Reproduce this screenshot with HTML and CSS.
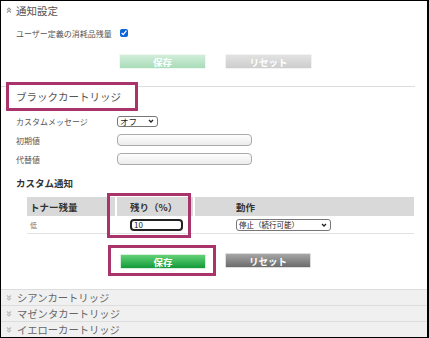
FILE: index.html
```html
<!DOCTYPE html>
<html lang="ja">
<head>
    <meta charset="UTF-8">
    <meta name="viewport" content="width=device-width, initial-scale=1.0">
    <title>トナー通知設定</title>
    <link rel="stylesheet" href="styles.css">
</head>
<body>
    <div class="frame">
        <div class="panel-head">
            <svg class="chev" viewBox="0 0 6 6"><polyline points="1,3 3,1 5,3"/><polyline points="1,5.5 3,3.5 5,5.5"/></svg>
            <span>通知設定</span>
        </div>
        <div class="field check-field">
            <span class="label">ユーザー定義の消耗品残量</span>
            <input type="checkbox" class="check" checked>
        </div>
        <div class="actions top-actions">
            <button class="btn save disabled">保存</button>
            <button class="btn reset disabled">リセット</button>
        </div>

        <div class="cart-head">
            <span class="cart-title">ブラックカートリッジ</span>
        </div>
        <div class="field first">
            <span class="label">カスタムメッセージ</span>
            <span class="select small">オフ<svg viewBox="0 0 6 4"><polyline points="1,1 3,3 5,1"/></svg></span>
        </div>
        <div class="field">
            <span class="label">初期値</span>
            <input type="text" class="text-in">
        </div>
        <div class="field">
            <span class="label">代替値</span>
            <input type="text" class="text-in">
        </div>

        <div class="subhead">カスタム通知</div>
        <div class="table-wrap">
            <table class="notify">
                <thead>
                    <tr>
                        <th class="c-level">トナー残量</th>
                        <th class="c-rest">残り（%）</th>
                        <th class="c-action">動作</th>
                    </tr>
                </thead>
                <tbody>
                    <tr>
                        <td class="c-level">低</td>
                        <td class="c-rest"><input type="text" class="rest-in" value="10"></td>
                        <td class="c-action"><span class="select wide">停止（続行可能）<svg viewBox="0 0 6 4"><polyline points="1,1 3,3 5,1"/></svg></span></td>
                    </tr>
                </tbody>
            </table>
            <div class="col-mark"></div>
        </div>

        <div class="actions bottom-actions">
            <span class="btn-mark"><button class="btn save">保存</button></span>
            <button class="btn reset">リセット</button>
        </div>

        <div class="accordion">
            <div class="acc-row">
                <svg class="chev" viewBox="0 0 6 6"><polyline points="1,0.5 3,2.5 5,0.5"/><polyline points="1,3 3,5 5,3"/></svg>
                シアンカートリッジ
            </div>
            <div class="acc-row">
                <svg class="chev" viewBox="0 0 6 6"><polyline points="1,0.5 3,2.5 5,0.5"/><polyline points="1,3 3,5 5,3"/></svg>
                マゼンタカートリッジ
            </div>
            <div class="acc-row">
                <svg class="chev" viewBox="0 0 6 6"><polyline points="1,0.5 3,2.5 5,0.5"/><polyline points="1,3 3,5 5,3"/></svg>
                イエローカートリッジ
            </div>
        </div>
    </div>
</body>
</html>
```

FILE: styles.css
```css
body {
    margin: 0;
    background: #fff;
    font-family: "Noto Sans CJK JP", "Noto Sans", sans-serif;
    color: #555;
}

.frame {
    width: 429px;
    height: 338px;
    box-sizing: border-box;
    border: 1px solid #000;
    border-right-width: 2px;
    display: flex;
    flex-direction: column;
    overflow: hidden;
}

.chev {
    width: 6px;
    height: 6px;
    fill: none;
    stroke: #999;
    stroke-width: 1.1;
    flex: none;
}

.panel-head {
    height: 19px;
    display: flex;
    align-items: center;
    gap: 4px;
    padding-left: 5px;
    font-size: 10.5px;
    color: #555;
}

.panel-head .chev {
    margin-top: -2px;
}

/* form rows */
.field {
    display: flex;
    align-items: center;
    height: 12px;
    padding-left: 15px;
    margin-top: 7px;
    font-size: 8px;
    color: #555;
}

.field .label {
    width: 101px;
    flex: none;
}

.field.first {
    margin-top: 4px;
}

.check-field .label {
    width: 104px;
}

.check {
    width: 8px;
    height: 8px;
    margin: 0;
    accent-color: #0b63d8;
}

.select {
    display: inline-flex;
    align-items: center;
    justify-content: space-between;
    box-sizing: border-box;
    border: 1px solid #777;
    border-radius: 3px;
    background: #fff;
    color: #222;
    padding: 0 3px 0 2px;
}

.select svg {
    width: 6px;
    height: 4px;
    fill: none;
    stroke: #222;
    stroke-width: 1.3;
}

.select.small {
    width: 41px;
    height: 11px;
    font-size: 8.5px;
}

.select.wide {
    width: 95px;
    height: 12px;
    font-size: 7.5px;
}

.text-in {
    width: 135px;
    height: 12px;
    box-sizing: border-box;
    margin: 0;
    border: 1px solid #aaa;
    border-radius: 4px;
    background: linear-gradient(#fdfdfd, #ececec);
}

/* buttons */
.actions {
    display: flex;
    align-items: center;
}

.top-actions {
    margin-top: 15px;
    padding-left: 118px;
    gap: 19px;
}

.btn {
    width: 87px;
    height: 15px;
    padding: 0;
    border: 1px solid #e6e6e6;
    border-radius: 1px;
    font-family: inherit;
    font-size: 9.5px;
    font-weight: bold;
    color: #fff;
}

.btn.save {
    background: linear-gradient(#63d176, #149b3a);
    border-color: #d8efdd;
}

.btn.reset {
    background: linear-gradient(#a6a6a6, #6b6b6b);
    border-color: #ddd;
}

.btn.save.disabled {
    background: linear-gradient(#d0eed9, #a9dbb8);
    border-color: #f0f8f2;
}

.btn.reset.disabled {
    background: linear-gradient(#e2e2e2, #cdcdcd);
    border-color: #f2f2f2;
}

/* black cartridge section */
.cart-head {
    margin: 17px 12px 0 0;
    height: 24px;
    border-top: 1px solid #ddd;
    display: flex;
}

.cart-title {
    margin: -2px 0 0 8px;
    width: 126px;
    height: 23px;
    line-height: 23px;
    padding-left: 7px;
    box-sizing: border-box;
    outline: 3px solid #a8346b;
    background: #fff;
    font-size: 10.5px;
    color: #555;
}

.subhead {
    margin-top: 12px;
    height: 12px;
    line-height: 12px;
    padding-left: 15px;
    font-size: 9.5px;
    font-weight: bold;
    color: #333;
}

/* notification table */
.table-wrap {
    position: relative;
    margin: 8px 0 0 26px;
    width: 387px;
}

.notify {
    width: 387px;
    border-collapse: separate;
    border-spacing: 0;
    table-layout: fixed;
}

.notify th {
    height: 19px;
    padding: 0;
    background: #d9d9d9;
    font-size: 9.5px;
    font-weight: bold;
    color: #333;
    text-align: left;
}

.notify td {
    height: 17px;
    padding: 0;
    border-bottom: 1px solid #e2e2e2;
    font-size: 7px;
    color: #777;
}

.notify .c-level {
    width: 85px;
    padding-left: 3px;
    border-right: 2px solid #fff;
}

.notify .c-rest {
    width: 63px;
    padding-left: 13px;
    border-right: 2px solid #fff;
}

.notify .c-action {
    padding-left: 41px;
}

.rest-in {
    width: 53px;
    height: 12px;
    box-sizing: border-box;
    margin: 0;
    padding: 0 0 0 2px;
    border: 2px solid #222;
    border-radius: 4px;
    font-family: inherit;
    font-size: 8px;
    color: #222;
    vertical-align: middle;
}

.notify .select.wide {
    vertical-align: middle;
}

.col-mark {
    position: absolute;
    left: 80px;
    top: -4px;
    width: 84px;
    height: 45px;
    box-sizing: border-box;
    border: 3px solid #a8346b;
}

.bottom-actions {
    margin-top: 11px;
    padding-left: 107px;
    gap: 9px;
}

.btn-mark {
    display: flex;
    border: 3px solid #a8346b;
    padding: 6px 7px 4px 9px;
}

.btn-mark .btn {
    width: 86px;
}

.bottom-actions .btn.reset {
    width: 86px;
}

/* collapsed cartridges */
.accordion {
    margin-top: auto;
}

.acc-row {
    height: 15px;
    border-top: 1px solid #ddd;
    background: #f0f0f0;
    display: flex;
    align-items: center;
    gap: 5px;
    padding-left: 5px;
    font-size: 10.3px;
    color: #666;
}

.acc-row .chev {
    stroke: #bbb;
}
```
